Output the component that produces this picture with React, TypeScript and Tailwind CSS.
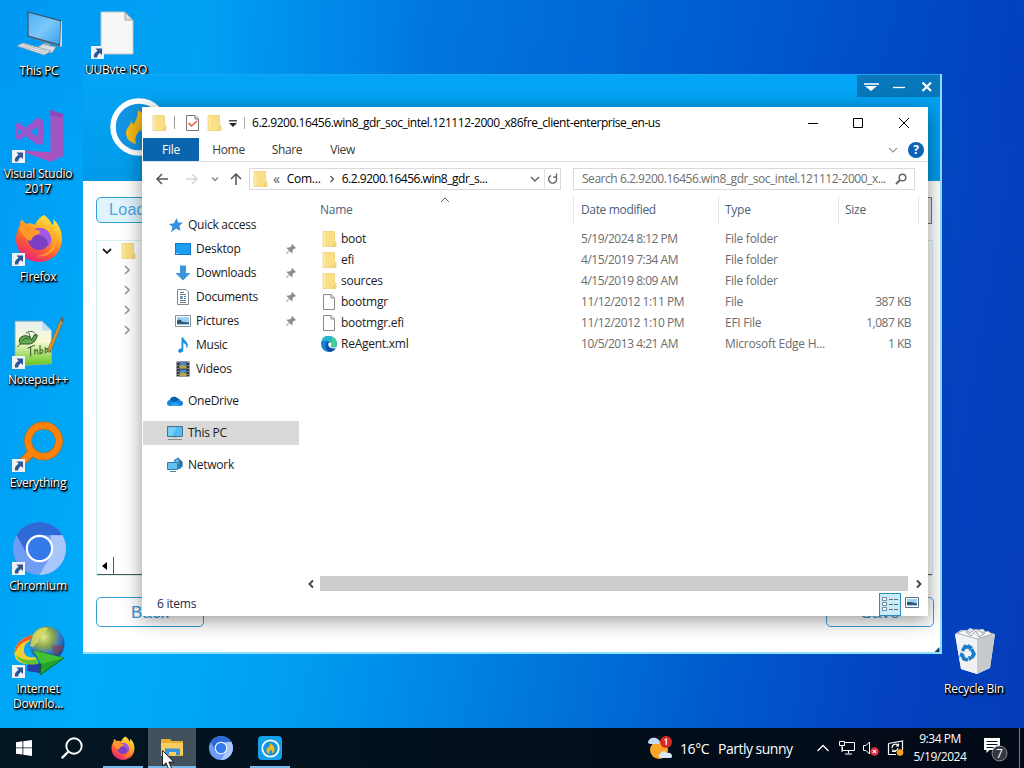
import React from "react";

type P = { className?: string };

const Folder = ({ className = "w-[15px] h-[16px]" }: P) => (
  <svg viewBox="0 0 15 16" className={`shrink-0 ${className}`}>
    <path d="M1 .5h11.500v10H14v5H1z" fill="#fbdf86" stroke="#eccb6a" strokeWidth=".7" />
    <path d="M1.500 1h2v14h-2z" fill="#fde9a6" />
    <path d="M12.500 11v4.500h-2z" fill="#eec75a" />
  </svg>
);

const Page = ({ className = "w-3 h-4" }: P) => (
  <svg viewBox="0 0 12 16" className={`shrink-0 ${className}`}>
    <path d="M.5.5h7.5L11.5 4v11.500H.5z" fill="#fff" stroke="#8b8b8b" />
    <path d="M8 .5V4h3.500" fill="none" stroke="#8b8b8b" />
  </svg>
);

const Edge = ({ className = "w-4 h-4" }: P) => (
  <svg viewBox="0 0 16 16" className={`shrink-0 ${className}`}>
    <circle cx="8" cy="8" r="8" fill="#1583d6" />
    <path d="M.6 5C2-.8 8-1.200 12 1.200 15 3 16.500 6.500 15.700 9c-.6 2-2.700 2.700-4.700 2.400-1.700-.3-1.800-1.300-1-2.300C11 6 6 2.500.6 5z" fill="#44cf8e" />
    <path d="M.6 5C2-.2 7-.8 10 .4 11.500 1.500 11.500 5 10.500 7 9.500 4.500 5 3 .6 5z" fill="#28b5d4" />
    <path d="M4.600 8.500c.3-2 2-3.300 3.700-3.300C6 8 7.500 12 14.700 12.200c-1.500 2.300-4 3.700-6.500 3.500C5.500 14.500 4.200 11.500 4.600 8.500z" fill="#0c4fa5" />
    <path d="M7.400 7.800c.4-1.400 2.200-1.700 3-.3.2.7-.1 1.200-.5 1.700-.7.900-.2 2.100 2 2.200 1.500.1 2.700-.3 3.500-.9l-.8 1.700C10.500 13 6.700 11.300 7.400 7.800z" fill="#fff" />
  </svg>
);

const Chev = ({ d, className = "", w = 1.5 }: { d: string; className?: string; w?: number }) => (
  <svg viewBox="0 0 10 10" className={`h-[10px] w-[10px] shrink-0 ${className}`} fill="none" stroke="currentColor" strokeWidth={w}>
    <path d={d} />
  </svg>
);
const DOWN = "M1 3l4 4 4-4";
const RIGHT = "M3 1l4 4-4 4";
const UP = "M1 7l4-4 4 4";
const SMALL_RIGHT = "M3.500 2l3 3-3 3";
const SMALL_LEFT = "M7 1.500L3.500 5 7 8.500";

const Monitor = ({ className = "" }: P) => (
  <svg viewBox="0 0 48 48" className={className}>
    <defs>
      <linearGradient id="scr" x1="0" y1="0" x2="1" y2="1">
        <stop offset="0" stopColor="#4eb0f5" />
        <stop offset=".5" stopColor="#7cc8fb" />
        <stop offset="1" stopColor="#389cec" />
      </linearGradient>
    </defs>
    <path d="M12 3l34 9-1 26-34-10z" fill="#6b7f91" />
    <path d="M12 3l33 9-1 24-32-9z" fill="url(#scr)" stroke="#3b5266" strokeWidth="1.200" />
    <path d="M46 12v25l-2 1 1-26z" fill="#cfd9e0" />
    <path d="M28 34l6 1-2 5-8-1z" fill="#a8b3bb" />
    <path d="M20 39l7-4 13 3-4 6z" fill="#d7dde1" stroke="#87929a" strokeWidth=".7" />
    <path d="M1 37l6-3 28 8-7 4z" fill="#e6e9eb" stroke="#8f9aa2" strokeWidth=".8" />
    <path d="M5 37l24 7M7 35.500l24 7" stroke="#a9b1b7" strokeWidth=".8" />
  </svg>
);

const BigPage = ({ className = "" }: P) => (
  <svg viewBox="0 0 34 44" className={className}>
    <path d="M1 1h24l8 8v34H1z" fill="#f7f7f7" stroke="#c0c4c8" />
    <path d="M25 1v8h8z" fill="#dcdfe1" stroke="#8c9298" strokeWidth=".8" />
  </svg>
);

const VisualStudio = ({ className = "" }: P) => (
  <svg viewBox="0 0 50 52" className={className}>
    <path d="M36 1l13 4v40l-13 6z" fill="#9d57c4" />
    <path d="M36 1l13 4-2 3-11-1z" fill="#8a49b4" />
    <path d="M37 42v9L11 42v-2z" fill="#b14fbd" />
    <path fillRule="evenodd" d="M24 8l5 3v22l-5 2-12-9-6 4-4-2V15l4-2 6 5zm0 9l-7 5 7 5zM5 19v6l4-3z" fill="#9b55cb" />
  </svg>
);

const Firefox = ({ className = "" }: P) => (
  <svg viewBox="0 0 48 48" className={className}>
    <defs>
      <linearGradient id="ff" x1=".8" y1="0" x2=".25" y2="1">
        <stop offset="0" stopColor="#fff04a" />
        <stop offset=".35" stopColor="#ffac26" />
        <stop offset=".65" stopColor="#ff5f30" />
        <stop offset="1" stopColor="#e31b80" />
      </linearGradient>
    </defs>
    <path d="M29 1c4 3 7 6 8 10 2-1 2-4 1-6 6 5 9 12 9 20 0 13-10 23-23 23S1 38 1 25c0-5 1-9 4-13 0-2 0-4 1-6 2 0 3 2 5 4 3-1 6-1 9 1 2-5 5-8 9-10z" fill="url(#ff)" />
    <circle cx="24" cy="25" r="11" fill="#7c3fc4" />
    <path d="M21 15c7-3 14 2 15 8 1 4-1 8-3 10 1-6-2-11-12-13z" fill="#a05ae2" />
    <path d="M4 13c6-4 12-2 15 2 2 1 6 1 6 3 0 3-6 3-7 5-1 1-1 3-3 4-5-3-10-7-11-14z" fill="#ff972b" />
    <path d="M33 10c7 4 11 14 7 23-3 7-11 11-18 9 9-1 16-6 17-15 0-7-3-12-6-17z" fill="#ffb32c" opacity=".7" />
  </svg>
);

const NotepadPP = ({ className = "" }: P) => (
  <svg viewBox="0 0 50 50" className={className}>
    <defs>
      <linearGradient id="npp" x1="0" y1="0" x2="0" y2="1">
        <stop offset="0" stopColor="#e8eff2" />
        <stop offset=".45" stopColor="#f8fbd4" />
        <stop offset="1" stopColor="#62c414" />
      </linearGradient>
    </defs>
    <path d="M2 5h26l9 9v32l-35 2z" fill="url(#npp)" stroke="#9fb0a8" strokeWidth=".8" />
    <path d="M28 5v9h9z" fill="#bbddf4" />
    <path d="M6 24c1-6 9-7 12-1l2-4c2-2 4-1 3 1-1 3-3 6-7 7H7z" fill="#62ad4d" stroke="#31563a" strokeWidth="1" />
    <path d="M12 17c3-3 8-3 9 0m-6-1l2 5M9 24c2-3 5-3 7-1M7 27l-3 3" fill="none" stroke="#31563a" strokeWidth=".9" />
    <path d="M14 31l7-3m-4 1v10m4-7v5m0-3c2-3 3-1 3 3m2-9v9m0-4c3-2 4 3 0 3m5-6v6m0-3c2-4 4 0 1 2m4-6v6" fill="none" stroke="#3c5c32" strokeWidth="1" />
    <path d="M47 1l2 2-12 29-3 3v-4z" fill="#d8982c" stroke="#94602a" strokeWidth=".7" />
    <path d="M47 1l2 2-1 3-3-2z" fill="#606870" />
  </svg>
);

const Everything = ({ className = "" }: P) => (
  <svg viewBox="0 0 48 48" className={className} fill="none">
    <path d="M6 42l12-12" stroke="#b66b19" strokeWidth="8.500" />
    <circle cx="28.500" cy="20" r="15.500" stroke="#b66b19" strokeWidth="8" />
    <path d="M6 42l12-12" stroke="#fb820b" strokeWidth="6.500" />
    <circle cx="28.500" cy="20" r="15.500" stroke="#fb820b" strokeWidth="6.500" />
  </svg>
);

const Chromium = ({ className = "" }: P) => (
  <svg viewBox="0 0 52 52" className={className}>
    <circle cx="26" cy="26" r="26" fill="#6f9df4" />
    <path d="M3.500 13a26 26 0 0 1 45 0H26L14 32z" fill="#2f69d5" />
    <path d="M48.500 13A26 26 0 0 1 26 52l11-19 0-20z" fill="#a9c6fa" />
    <circle cx="26" cy="26" r="13.500" fill="#fff" />
    <circle cx="26" cy="26" r="11.300" fill="#347be9" />
  </svg>
);

const Idm = ({ className = "" }: P) => (
  <svg viewBox="0 0 52 50" className={className}>
    <defs>
      <radialGradient id="globe" cx=".4" cy=".3" r=".8">
        <stop offset="0" stopColor="#e4ec8c" />
        <stop offset=".35" stopColor="#8aa84c" />
        <stop offset=".6" stopColor="#3477cc" />
        <stop offset="1" stopColor="#142d68" />
      </radialGradient>
    </defs>
    <path d="M15 35l20 4-8 8-13-2z" fill="#243fa8" />
    <path d="M19 9C5 12-2 24 3 33c5 6 14 6 20 4v-6c-8 1-12-1-12-7 0-6 4-9 10-10z" fill="#f0cd31" />
    <path d="M19 9C8 12 1 20 2 27c3-7 6-11 17-14z" fill="#f25a2b" />
    <path d="M3 29c3 8 13 11 22 9v-5c-9 2-17 1-22-4z" fill="#62c52b" />
    <circle cx="34" cy="18" r="17.500" fill="url(#globe)" />
    <path d="M20 9c4-6 10-8 15-7l-3 5-5 2-2 7-5 5-3-1z" fill="#dfdc66" opacity=".75" />
    <path d="M38 20c4-1 8-1 12 0-1 5-4 7-8 9z" fill="#a63420" opacity=".5" />
    <path d="M20 24l31 8-24 17 1-11z" fill="#23a32b" stroke="#0d5412" strokeWidth=".8" />
    <path d="M20 24l31 8-23 6z" fill="#43bf36" />
  </svg>
);

const Recycle = ({ className = "" }: P) => (
  <svg viewBox="0 0 42 48" className={className}>
    <path d="M1 7l6-4 5 1 4-3 5 2 8-1 3 3 9 2-5 34-13 6-16-5z" fill="#dfe2e4" />
    <path d="M23 11l18-4-5 34-13 6z" fill="#c6cacd" />
    <path d="M1 7l22 4v36L7 42z" fill="#eff1f2" />
    <path d="M3 6l8-3 5 3 6-4 6 4 6-2 4 3-15 5z" fill="#f8f8f8" stroke="#9aa1a7" strokeWidth=".8" />
    <path d="M12 5l5 4 5-5 3 6 6-4" fill="none" stroke="#92999f" strokeWidth="1" />
    <g fill="none" stroke="#187bc9" strokeWidth="3.600">
      <path d="M8.500 24l2.500-4.500 4 1" />
      <path d="M17.500 22l2.500 5-2 3" />
      <path d="M14 33l-4-1-2-4" />
    </g>
    <path d="M14 17l5 3-4 4zM21 30l-6 4-1-5zM5 30l2-5 4 3z" fill="#187bc9" />
  </svg>
);

const Shortcut = () => (
  <svg viewBox="0 0 13 13" className="absolute bottom-0 left-0 h-[13px] w-[13px]">
    <path d="M0 0h13v13H0z" fill="#eef2f6" />
    <path d="M4.500 2.500H11v6.500L8.900 7C7.300 8.200 6.300 9.500 6.200 11.500H3C2.300 9 3.800 6.500 6.600 4.800z" fill="#2c5596" />
  </svg>
);

const LABEL =
  "pt-[3px] text-center text-[12px] leading-[15px] text-white whitespace-nowrap tracking-[-0.25px] [text-shadow:1px_1px_1px_#000,1px_1px_2px_#000,0_1px_1px_#000,1px_2px_2px_rgba(0,0,0,0.8)]";

const DeskIcon = ({
  pos, icon, lines, link = true, box = "h-[54px] w-[54px]",
}: { pos: string; icon: React.ReactNode; lines: string[]; link?: boolean; box?: string }) => (
  <div className={`absolute flex w-[90px] flex-col items-center ${pos}`}>
    <div className={`relative ml-[2px] flex items-center justify-center ${box}`}>
      {icon}
      {link && <Shortcut />}
    </div>
    <div className={LABEL}>
      {lines.map((l) => <div key={l}>{l}</div>)}
    </div>
  </div>
);

const Flame = ({ className = "" }: P) => (
  <svg viewBox="0 0 60 60" className={className}>
    <circle cx="30" cy="30" r="26" fill="#1295e4" stroke="#fff" strokeWidth="5.500" />
    <path d="M29 13c9 6 14 13 14 21 0 6-4 10-8 12 1-5 0-9-4-13-3 4-6 7-4 14-7-2-10-6-10-11 0-5 4-6 5-12 1 1 2 3 2 4 3-4 5-9 5-15z" fill="#f6ba17" />
  </svg>
);

function UUByteWindow() {
  return (
    <div className="absolute left-[83px] top-[74px] flex h-[580px] w-[859px] flex-col overflow-hidden border-b-2 border-r-2 border-[#8fe0fc] bg-white">
      <div className="flex h-[107px] shrink-0 justify-between border-t border-[#20a6f0] bg-gradient-to-b from-[#04a5f6] to-[#009ae9]">
        <Flame className="ml-[26px] mt-[22px] h-[60px] w-[60px]" />
        <div className="flex h-[22px] w-[83px] items-center bg-[#0877bb] text-white">
          <svg viewBox="0 0 83 22" className="h-[22px] w-[83px]" fill="none" stroke="#fff">
            <path d="M7 9h15" strokeWidth="1.500" />
            <path d="M8 11h12l-6 5z" fill="#fff" stroke="none" />
            <path d="M36 12.500h12" strokeWidth="1.300" />
            <path d="M65.500 7.500l8.500 8.500m0-8.500L65.500 16" strokeWidth="2.200" />
          </svg>
        </div>
      </div>
      <div className="flex h-[42px] shrink-0 items-center justify-between pl-[13px] pr-[8px] pt-[16px]">
        <div className="flex h-[26px] w-[108px] items-center rounded-[5px] border border-[#2f9fd6] bg-[#e0f4fd] pl-[12px] font-['Liberation_Sans',sans-serif] text-[16px] tracking-[0.3px] text-[#4aa5e4]">Load</div>
        <div className="h-[27px] w-[80px] border border-[#777] bg-[#e8e8e8]" />
      </div>
      <div className="ml-[13px] mr-[7px] mt-[17px] flex h-[336px] shrink-0 flex-col border border-[#d3f1f3]">
        <div className="flex h-[19px] items-center pl-[5px] text-[#222]">
          <Chev d={DOWN} w={1.8} />
          <Folder className="ml-[9px] h-[16px] w-[15px]" />
        </div>
        {[0, 1, 2, 3].map((i) => (
          <div key={i} className="flex h-[20px] items-center pl-[25px] text-[#999]"><Chev d={RIGHT} w={1.7} /></div>
        ))}
        <div className="mt-auto flex h-[18px] border-b border-[#555]">
          <div className="flex w-[17px] items-center justify-center border-r border-[#555]">
            <svg viewBox="0 0 6 8" className="h-2 w-[6px]"><path d="M5 0v8L0 4z" fill="#000" /></svg>
          </div>
        </div>
      </div>
      <div className="ml-[13px] mr-[6px] mt-[21px] flex justify-between font-['Liberation_Sans',sans-serif] text-[17px] text-[#2e98dc]">
        <div className="flex h-[30px] w-[108px] items-center justify-center rounded-[5px] border border-[#2f9fd6] pt-px">Back</div>
        <div className="flex h-[30px] w-[108px] items-center justify-center rounded-[5px] border border-[#3c9ddc] pt-px">Save</div>
      </div>
      <div className="mt-auto flex justify-end"><svg viewBox="0 0 6 6" className="h-[5px] w-[6px]"><path d="M6 0v6H0z" fill="#0c3f66" /></svg></div>
    </div>
  );
}

const I = "h-4 w-4 shrink-0";
const Star = () => (<svg viewBox="0 0 16 16" className={I}><path d="M9.500 1l1.700 4.400 4.800.2-3.600 3.200L13.500 14 9 11.500 4 15.500l1.500-5.700L2 7l5-.8z" fill="#3390e2" /></svg>);
const DesktopI = () => (<svg viewBox="0 0 16 16" className={I}><path d="M0 2h16v12H0z" fill="#1677cf" /><path d="M1 3h14v10H1z" fill="#1b9df2" /><path d="M1 12.500h3" stroke="#8fd0f8" /></svg>);
const DownI = () => (<svg viewBox="0 0 16 16" className={I}><path d="M5 .5h6V8h4.500L8 15.500.5 8H5z" fill="#3d93dd" /></svg>);
const DocI = () => (<svg viewBox="0 0 16 16" className={I}><path d="M2.500.5H11L13.500 3v12.500h-11z" fill="#fff" stroke="#7e8b96" /><path d="M5 3.500h4M5 5.500h6M5 11.500h6M5 13.500h6M9 7.500h2M9 9.500h2" stroke="#64788a" /><path d="M5 7h3v3H5z" fill="#6b9bc6" /></svg>);
const PicI = () => (<svg viewBox="0 0 16 12" className="h-3 w-4 shrink-0"><path d="M.5.5h15v11H.5z" fill="#fff" stroke="#88939b" /><path d="M2 2h12v8H2z" fill="#9bd0f3" /><path d="M2 5.500l3-1L8 7l6 .500V9H2z" fill="#31586f" /></svg>);
const MusicI = () => (<svg viewBox="0 0 16 16" className={I}><path d="M6.500.5h1.800c.5 3 5 4 4.500 9-.3 1-.9 1.500-1.500 2 1-3-1-5-3-5.500v7C8.300 15 6.300 16 4.600 15.700 2.800 15.300 2.600 13 4.300 12c.7-.5 1.700-.6 2.200-.5z" fill="#1b8fe3" /></svg>);
const VideoI = () => (<svg viewBox="0 0 16 16" className={I}><path d="M1.500.5h13v15h-13z" fill="#30363d" /><path d="M4.500 1h7v6.500h-7z" fill="#4d84c9" /><path d="M4.500 5l3-1.500 4 2V7.500h-7z" fill="#b5a53a" /><path d="M4.500 8.500h7V15h-7z" fill="#4d84c9" /><path d="M4.500 12.500L8 11l3.500 2v2h-7z" fill="#b5a53a" /><path d="M3 1v15M13 1v15" stroke="#d9e0e5" strokeDasharray="1 2" /></svg>);
const CloudI = () => (<svg viewBox="0 0 16 12" className="h-3 w-4 shrink-0"><path d="M3 11C1 11 0 9.700 0 8.200 0 6.500 1.300 5 3 5c1-3 5-4.500 7.500-1.500C12 3.300 13 4.500 13.200 5.500 15 5.500 16 6.800 16 8.200S15 11 13.500 11z" fill="#1583d8" /><path d="M3 5c1-3 5-4.500 7.500-1.500L12.500 4 8 7z" fill="#0b5cae" /><path d="M2 10.500L8.500 7l5.500 4H3z" fill="#2ba4ed" /></svg>);
const PCI = () => (<svg viewBox="0 0 16 16" className={I}><path d="M.5 1.500h15v10H.5z" fill="#51bdf1" stroke="#47718c" /><path d="M1 2h9L5 11H1z" fill="#8bdbfa" opacity=".6" /><path d="M1 14.500h14" stroke="#838b91" /><path d="M6 12.500h4" stroke="#b6c0c6" /></svg>);
const NetI = () => (<svg viewBox="0 0 16 16" className={I}><path d="M7 3l4-2.500 4.500 4.500v5l-3.500 2.500-5-4z" fill="#3d8fc9" /><path d="M11.500 1v10l4-2.500V5z" fill="#2d76a9" /><path d="M8.500 3.500l3-1.500v5l-3 1z" fill="#74bde9" /><path d="M.5 5.500h10v7H.5z" fill="#62c2f4" stroke="#3579a5" /><path d="M3 14.500h6" stroke="#5b7d92" /></svg>);
const Pin = () => (
  <svg viewBox="0 0 10 10" className="h-[10px] w-[10px] shrink-0"><path d="M6 0l4 4-1 .7-.7-.3L6.500 6.300l.3 2-1 1L3.500 7 .8 9.800 0 10l.2-.8L3 6.500.8 4.300l1-1 2 .3L5.700 1.700 5.400.8z" fill="#868e95" /></svg>
);

const NAV: { t: string; icon: React.ReactNode; lvl: 0 | 1; pin?: boolean; gap?: boolean; sel?: boolean }[] = [
  { t: "Quick access", icon: <Star />, lvl: 0 },
  { t: "Desktop", icon: <DesktopI />, lvl: 1, pin: true },
  { t: "Downloads", icon: <DownI />, lvl: 1, pin: true },
  { t: "Documents", icon: <DocI />, lvl: 1, pin: true },
  { t: "Pictures", icon: <PicI />, lvl: 1, pin: true },
  { t: "Music", icon: <MusicI />, lvl: 1 },
  { t: "Videos", icon: <VideoI />, lvl: 1 },
  { t: "OneDrive", icon: <CloudI />, lvl: 0, gap: true },
  { t: "This PC", icon: <PCI />, lvl: 0, gap: true, sel: true },
  { t: "Network", icon: <NetI />, lvl: 0, gap: true },
];

const FILES = [
  { k: "d", n: "boot", d: "5/19/2024 8:12 PM", t: "File folder", s: "" },
  { k: "d", n: "efi", d: "4/15/2019 7:34 AM", t: "File folder", s: "" },
  { k: "d", n: "sources", d: "4/15/2019 8:09 AM", t: "File folder", s: "" },
  { k: "f", n: "bootmgr", d: "11/12/2012 1:11 PM", t: "File", s: "387 KB" },
  { k: "f", n: "bootmgr.efi", d: "11/12/2012 1:10 PM", t: "EFI File", s: "1,087 KB" },
  { k: "e", n: "ReAgent.xml", d: "10/5/2013 4:21 AM", t: "Microsoft Edge H...", s: "1 KB" },
];

function Explorer() {
  return (
    <div className="absolute left-[142px] top-[107px] flex h-[509px] w-[786px] flex-col whitespace-nowrap bg-white text-[12px] tracking-[-0.25px] text-[#1a1a1a] shadow-[0_4px_18px_rgba(0,0,0,0.42)]">
      <div className="flex h-[31px] shrink-0 items-center pl-[10px]">
        <Folder />
        <div className="ml-[7px] h-[13px] w-px bg-[#999]" />
        <svg viewBox="0 0 13 16" className="ml-[11px] h-4 w-[13px]">
          <path d="M.5.5h8.500l3.500 3.500v11.500H.5z" fill="#fff" stroke="#777" /><path d="M9 .5V4h3.500" fill="none" stroke="#777" />
          <path d="M2.500 8l3 3L11 6" fill="none" stroke="#e8573d" strokeWidth="1.600" />
        </svg>
        <Folder className="ml-[8px] h-[16px] w-[15px]" />
        <svg viewBox="0 0 8 7" className="ml-[7px] mt-[2px] h-[7px] w-[8px]"><path d="M0 .8h8" stroke="#222" strokeWidth="1.200" /><path d="M0 3h8L4 7z" fill="#222" /></svg>
        <div className="ml-[7px] h-[12px] w-px bg-[#aaa]" />
        <div className="ml-[7px] tracking-[-0.45px] text-black">6.2.9200.16456.win8_gdr_soc_intel.121112-2000_x86fre_client-enterprise_en-us</div>
        <svg viewBox="0 0 102 12" className="ml-auto mr-[18px] h-3 w-[102px]" fill="none" stroke="#000">
          <path d="M0 6.500h10M45.500 1.500h9v9h-9zM91 1l10 10m0-10L91 11" />
        </svg>
      </div>
      <div className="flex h-[24px] shrink-0 items-stretch border-b border-[#dcdddf] text-[#3a3a3a]">
        <div className="ml-px flex w-[56px] items-center justify-center bg-[#0a64ae] pt-px text-white">File</div>
        <div className="flex w-[59px] items-center justify-center tracking-[-0.3px]">Home</div>
        <div className="flex w-[58px] items-center justify-center tracking-[-0.4px]">Share</div>
        <div className="flex w-[53px] items-center justify-center tracking-[-0.4px]">View</div>
        <div className="ml-auto flex items-center gap-[10px] pr-[4px]">
          <Chev d={DOWN} className="text-[#999]" w={1.1} />
          <div className="flex h-4 w-4 items-center justify-center rounded-full bg-[#0c62b3] text-[12px] font-bold text-white">?</div>
        </div>
      </div>
      <div className="flex h-[34px] shrink-0 items-center pl-[14px]">
        <svg viewBox="0 0 88 14" className="h-[14px] w-[88px] shrink-0" fill="none" strokeWidth="1.500">
          <path d="M12 7H1m5-5L1 7l5 5" stroke="#555" />
          <path d="M30 7h11m-5-5l5 5-5 5" stroke="#d6d6d6" />
          <path d="M56 5.500l3 3 3-3" stroke="#888" />
          <path d="M80 13V2m-5 5l5-5 5 5" stroke="#555" />
        </svg>
        <div className="ml-[5px] flex h-[22px] w-[312px] shrink-0 items-center border border-[#d9d9d9] pl-[3px] text-black">
          <Folder className="h-[16px] w-[15px]" />
          <span className="ml-[5px] text-[14px] leading-none text-[#555]">«</span>
          <span className="ml-[7px] w-[38px]">Com...</span>
          <Chev d={SMALL_RIGHT} className="ml-[2px] text-[#555]" w={1.3} />
          <span className="ml-[5px] tracking-[-0.48px]">6.2.9200.16456.win8_gdr_s...</span>
          <Chev d={DOWN} className="ml-auto text-[#666]" w={1.5} />
          <div className="ml-[4px] flex h-full w-[16px] items-center justify-center border-l border-[#e3e3e3]">
            <svg viewBox="0 0 11 12" className="h-3 w-[11px]" fill="none" stroke="#666" strokeWidth="1.400"><path d="M8.600 3.500A4 4 0 1 1 4 2.500" /><path d="M9.500 .5v3.600H6" /></svg>
          </div>
        </div>
        <div className="ml-[12px] flex h-[22px] w-[342px] shrink-0 items-center border border-[#d9d9d9] pl-[8px] text-[#6d6d6d]">
          <span className="tracking-[-0.46px]">Search 6.2.9200.16456.win8_gdr_soc_intel.121112-2000_x...</span>
          <svg viewBox="0 0 12 12" className="ml-auto mr-[7px] h-3 w-3 shrink-0" fill="none" stroke="#666"><circle cx="7.500" cy="4.500" r="3.300" strokeWidth="1.500" /><path d="M5 7L1 11" strokeWidth="2" /></svg>
        </div>
      </div>
      <div className="flex min-h-0 flex-1">
        <div className="flex w-[161px] shrink-0 flex-col pl-px pt-[17px]">
          {NAV.map((r) => (
            <div key={r.t} className={`flex h-[24px] w-[156px] shrink-0 items-center ${r.gap ? "mt-2" : ""} ${r.sel ? "bg-[#d9d9d9]" : ""} ${r.lvl ? "pl-[32px]" : "pl-[24px]"}`}>
              {r.icon}
              <span className="ml-[5px] tracking-[-0.26px]">{r.t}</span>
              {r.pin && <div className="ml-auto mr-[3px] flex"><Pin /></div>}
            </div>
          ))}
        </div>
        <div className="flex min-w-0 flex-1 flex-col">
          <div className="flex h-[28px] shrink-0 text-[#4c607a]">
            <div className="flex w-[270px] flex-col">
              <div className="flex h-[5px] items-start justify-center pl-[13px]"><Chev d={UP} className="-mt-[1px] text-[#666]" w={1} /></div>
              <div className="pl-[17px] leading-[18px]">Name</div>
            </div>
            <div className="flex w-[145px] items-center border-l border-[#e9e9e9] pb-[1px] pl-[7px] tracking-[-0.35px]">Date modified</div>
            <div className="flex w-[120px] items-center border-l border-[#e9e9e9] pb-[1px] pl-[6px]">Type</div>
            <div className="flex w-[80px] items-center border-l border-[#e9e9e9] pb-[1px] pl-[6px]">Size</div>
            <div className="border-l border-[#e9e9e9]" />
          </div>
          <div className="flex flex-col pt-[4px]">
            {FILES.map((f) => (
              <div key={f.n} className="flex h-[21px] items-center text-[#6d6d6d]">
                <div className="flex w-[278px] items-center pl-[17px] text-[#1a1a1a]">
                  <div className="flex w-[21px]">{f.k === "d" ? <Folder className="ml-[2px] h-[16px] w-[15px]" /> : f.k === "f" ? <Page className="ml-[3px] h-4 w-3" /> : <Edge className="ml-px h-4 w-4" />}</div>
                  {f.n}
                </div>
                <div className="w-[144px] tracking-[-0.48px]">{f.d}</div>
                <div className="w-[120px]">{f.t}</div>
                <div className="w-[66px] text-right tracking-[-0.5px]">{f.s}</div>
              </div>
            ))}
          </div>
          <div className="mt-auto flex h-[17px] shrink-0 items-center pr-[4px] text-[#444]">
            <Chev d={SMALL_LEFT} className="ml-[3px]" w={1.9} />
            <div className="ml-[4px] h-[15px] flex-1 bg-[#cdcdcd]" />
            <Chev d="M3 1.500L6.500 5 3 8.500" className="ml-[6px]" w={1.9} />
          </div>
        </div>
      </div>
      <div className="flex h-[24px] shrink-0 items-center pl-[15px] text-[#26294f]">
        6 items
        <div className="ml-auto flex h-[23px] w-[22px] items-center justify-center border border-[#2a8dbb] bg-[#c8ecfb]">
          <svg viewBox="0 0 18 14" className="h-[14px] w-[18px]" fill="none" stroke="#5c6f7a"><path d="M1.500.5h4v3h-4zM1.500 5.500h4v3h-4zM1.500 10.500h4v3h-4z" fill="#fff" strokeWidth=".8" /><path d="M8 2.500h9M8 7.500h9M8 12.500h9" strokeDasharray="4 1" /></svg>
        </div>
        <svg viewBox="0 0 14 11" className="mb-[3px] ml-[4px] mr-[9px] h-[11px] w-[14px]"><path d="M.5.5h13v10H.5z" fill="#fff" stroke="#577189" /><path d="M2 2h10v7H2z" fill="#9bd0f3" /><path d="M2 5h4l6 1.500V8H2z" fill="#31586f" /></svg>
      </div>
    </div>
  );
}

const Task = ({ w, bar = "", bg = "", children }: { w: string; bar?: string; bg?: string; children: React.ReactNode }) => (
  <div className={`flex h-full shrink-0 flex-col items-center ${w} ${bg}`}>
    <div className="flex h-[38px] items-center pt-[2px]">{children}</div>
    <div className={`h-[2px] ${bar}`} />
  </div>
);

function Taskbar() {
  return (
    <div className="flex h-[40px] shrink-0 items-center bg-gradient-to-r from-[#031722] via-[#030f1c] to-[#030a17] text-white">
      <Task w="w-[48px]"><svg viewBox="0 0 16 16" className="h-4 w-4"><path d="M0 2.200L6.500 1.300v6.200H0zM7.300 1.200L16 0v7.500H7.300zM0 8.300h6.500v6.300L0 13.700zM7.300 8.300H16V16l-8.700-1.300z" fill="#fff" /></svg></Task>
      <Task w="w-[48px]"><svg viewBox="0 0 22 22" className="h-[22px] w-[22px]" fill="none" stroke="#fff"><circle cx="13" cy="9" r="7.700" strokeWidth="1.900" /><path d="M7.500 14.500L.8 21.200" strokeWidth="2.300" /></svg></Task>
      <Task w="ml-px w-[51px]" bar="w-[40px] bg-[#76b9ed]"><Firefox className="h-6 w-6" /></Task>
      <Task w="w-[48px]" bg="bg-[#42525c]" bar="w-[48px] bg-[#76b9ed]">
        <svg viewBox="0 0 24 20" className="h-5 w-6"><path d="M1 1h9l2 2h11v15H1z" fill="#e8ad35" /><path d="M1 5h22v12H1z" fill="#f8cd62" /><path d="M5 10.500h15v6.500h-4v-3H9v3H5z" fill="#3a92d8" /><path d="M12 14h3v4h-3z" fill="#f8cd62" /></svg>
      </Task>
      <Task w="w-[50px]"><Chromium className="h-6 w-6" /></Task>
      <Task w="w-[48px]" bar="w-[40px] bg-[#76b9ed]">
        <div className="flex h-6 w-6 items-center justify-center rounded-[4px] bg-[#12a0e8]"><Flame className="h-[19px] w-[19px]" /></div>
      </Task>
      <div className="ml-auto flex items-center">
        <svg viewBox="0 0 24 24" className="h-6 w-6">
          <circle cx="11" cy="14" r="9" fill="#f9a526" /><path d="M0 7c0-4 4-6 8-5 3 1 4 3 4 6H2z" fill="#c3dcf1" />
          <path d="M12 18c1-3 5-4 7-1 3-1 5 1 5 3s-1 2-3 2h-8c-3 0-3-3-1-4z" fill="#d7e7f5" />
          <circle cx="18" cy="6" r="6" fill="#d92b24" /><path d="M16.700 4l1.500-1v6" stroke="#fff" fill="none" strokeWidth="1.200" />
        </svg>
        <span className="ml-[8px] w-[38px] text-[14px] tracking-[-0.4px]">16°C</span>
        <span className="w-[98px] whitespace-nowrap text-[14px] tracking-[-0.5px]">Partly sunny</span>
        <svg viewBox="0 0 14 8" className="h-2 w-[14px]" fill="none" stroke="#fff" strokeWidth="1.300"><path d="M1.500 7L7 1.500 12.500 7" /></svg>
        <svg viewBox="0 0 16 14" className="ml-[9px] h-[14px] w-4" fill="none" stroke="#fff"><path d="M5.500 1.500h10v8h-12V6M9.500 9.500v3M6 13h7M.5.500h5v4h-5zM3 4.500V11" /></svg>
        <svg viewBox="0 0 16 16" className="ml-[8px] h-4 w-4" fill="none" stroke="#fff"><path d="M.500 5.500h2.500L6.500 2v12L3 10.500H.500z" /><circle cx="11.500" cy="11.500" r="4.300" fill="#dc2d3f" stroke="none" /><path d="M9.800 9.800l3.400 3.400m0-3.400l-3.400 3.400" strokeWidth="1.200" /></svg>
        <svg viewBox="0 0 17 16" className="ml-[8px] h-4 w-[17px]" fill="none" stroke="#fff"><path d="M1.500 3.500L15.500 1v9M9 14.500H1.500v-11M5 8c0-4 5-5 6-2M11.500 3.500V6H9M5 11.500h4M11 8c-.5 3-4 4-6 1.500" strokeWidth="1.200" /><circle cx="13" cy="12.500" r="3.300" fill="#f9a21b" stroke="none" /></svg>
        <div className="ml-[6px] flex w-[60px] flex-col items-center text-[12px] leading-[18px] tracking-[-0.45px]"><span>9:34 PM</span><span>5/19/2024</span></div>
        <svg viewBox="0 0 24 25" className="ml-[14px] mt-[3px] h-[25px] w-6"><path d="M0 1h16v12H5.500L2.500 16v-3H0z" fill="#fff" /><path d="M2.500 4.500h11M2.500 7.500h11M2.500 10.500h7" stroke="#03101d" /><circle cx="15.500" cy="16.500" r="7.500" fill="#33383e" stroke="#8a8f94" /><text x="15.500" y="21" fontSize="12" textAnchor="middle" fill="#fff">7</text></svg>
        <div className="ml-[11px] mr-[4px] h-[40px] w-px bg-[#777e86]" />
      </div>
    </div>
  );
}

export default function App() {
  return (
    <div className="relative flex h-[768px] w-[1024px] flex-col overflow-hidden font-['Open_Sans','Noto_Sans',sans-serif]">
      <div className="relative flex-1 bg-[linear-gradient(100deg,#0099f2_0%,#00adf9_18%,#009ff2_35%,#007bdc_55%,#0058cc_74%,#0442c0_88%,#043db8_100%)]">
        <div className="absolute inset-x-0 top-0 h-[140px] bg-[linear-gradient(90deg,transparent_0%,rgba(0,64,200,0.1)_20%,rgba(0,64,200,0.4)_42%,rgba(0,64,200,0.3)_100%)] [mask-image:linear-gradient(180deg,#000_50%,transparent)]" />
        <DeskIcon pos="left-[-6px] top-[6px]" link={false} icon={<Monitor className="h-[48px] w-[48px]" />} lines={["This PC"]} />
        <DeskIcon pos="left-[71px] top-[7px]" box="h-[52px] w-[52px]" icon={<BigPage className="h-[44px] w-[34px]" />} lines={["UUByte ISO"]} />
        <DeskIcon pos="left-[-7px] top-[109px]" icon={<VisualStudio className="h-[54px] w-[54px]" />} lines={["Visual Studio", "2017"]} />
        <DeskIcon pos="left-[-7px] top-[212px]" icon={<Firefox className="-mt-[2px] h-[48px] w-[48px]" />} lines={["Firefox"]} />
        <DeskIcon pos="left-[-7px] top-[315px]" icon={<NotepadPP className="h-[52px] w-[52px]" />} lines={["Notepad++"]} />
        <DeskIcon pos="left-[-7px] top-[418px]" icon={<Everything className="h-[48px] w-[48px]" />} lines={["Everything"]} />
        <DeskIcon pos="left-[-7px] top-[521px]" icon={<Chromium className="h-[53px] w-[53px]" />} lines={["Chromium"]} />
        <DeskIcon pos="left-[-7px] top-[624px]" icon={<Idm className="h-[50px] w-[52px]" />} lines={["Internet", "Downlo..."]} />
        <DeskIcon pos="left-[929px] top-[624px]" link={false} icon={<Recycle className="h-[48px] w-[42px]" />} lines={["Recycle Bin"]} />
        <UUByteWindow />
        <Explorer />
      </div>
      <Taskbar />
      <svg viewBox="0 0 13 20" className="absolute left-[162px] top-[750px] h-5 w-[13px]"><path d="M.5.5v15.500L4 12.800l2.800 6.500 2.700-1.200L6.800 12h5z" fill="#fff" stroke="#000" strokeWidth=".8" /></svg>
    </div>
  );
}
